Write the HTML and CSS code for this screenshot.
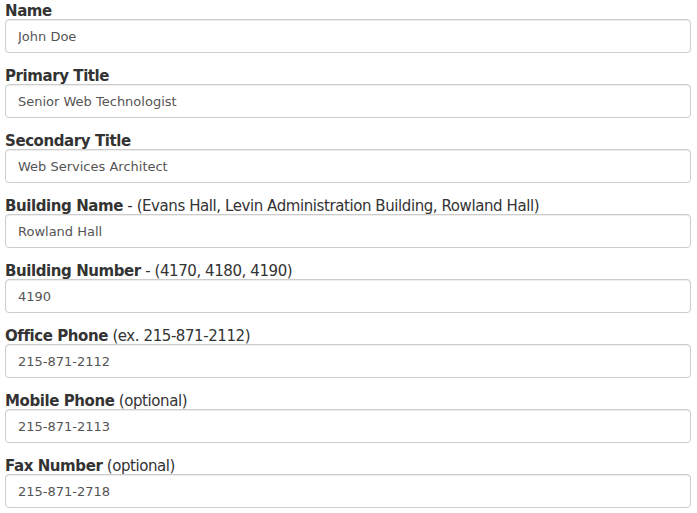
FILE: index.html
```html
<!DOCTYPE html>
<html>
<head>
<meta charset="utf-8">
<link rel="stylesheet" href="styles.css">
</head>
<body>
<form class="form">
  <div class="field">
    <label class="label"><b>Name</b></label>
    <input class="input" type="text" value="John Doe">
  </div>
  <div class="field">
    <label class="label"><b>Primary Title</b></label>
    <input class="input" type="text" value="Senior Web Technologist">
  </div>
  <div class="field">
    <label class="label"><b>Secondary Title</b></label>
    <input class="input" type="text" value="Web Services Architect">
  </div>
  <div class="field">
    <label class="label"><b>Building Name</b> - (Evans Hall, Levin Administration Building, Rowland Hall)</label>
    <input class="input" type="text" value="Rowland Hall">
  </div>
  <div class="field">
    <label class="label"><b>Building Number</b> - (4170, 4180, 4190)</label>
    <input class="input" type="text" value="4190">
  </div>
  <div class="field">
    <label class="label"><b>Office Phone</b> (ex. 215-871-2112)</label>
    <input class="input" type="text" value="215-871-2112">
  </div>
  <div class="field">
    <label class="label"><b>Mobile Phone</b> (optional)</label>
    <input class="input" type="text" value="215-871-2113">
  </div>
  <div class="field">
    <label class="label"><b>Fax Number</b> (optional)</label>
    <input class="input" type="text" value="215-871-2718">
  </div>
</form>
</body>
</html>
```
FILE: styles.css
```css
html, body {
  margin: 0;
  padding: 0;
  background: #fff;
}
.form {
  display: flex;
  flex-direction: column;
  gap: 12px;
  padding: 0 6px 0 5px;
  font-family: "DejaVu Sans", Verdana, sans-serif;
}
.field {
  display: flex;
  flex-direction: column;
}
.label {
  display: block;
  font-size: 15px;
  line-height: 16px;
  padding-top: 3px;
  color: #333;
  letter-spacing: -0.42px;
}
.label b {
  font-weight: bold;
}
.input {
  box-sizing: border-box;
  height: 34px;
  width: 100%;
  margin: 0;
  padding: 1px 12px 0;
  border: 1px solid #ccc;
  border-radius: 4px;
  font-family: "DejaVu Sans", Verdana, sans-serif;
  font-size: 13px;
  color: #555;
  background: #fff;
  box-shadow: inset 0 1px 1px rgba(0,0,0,0.075);
  outline: none;
}
```
